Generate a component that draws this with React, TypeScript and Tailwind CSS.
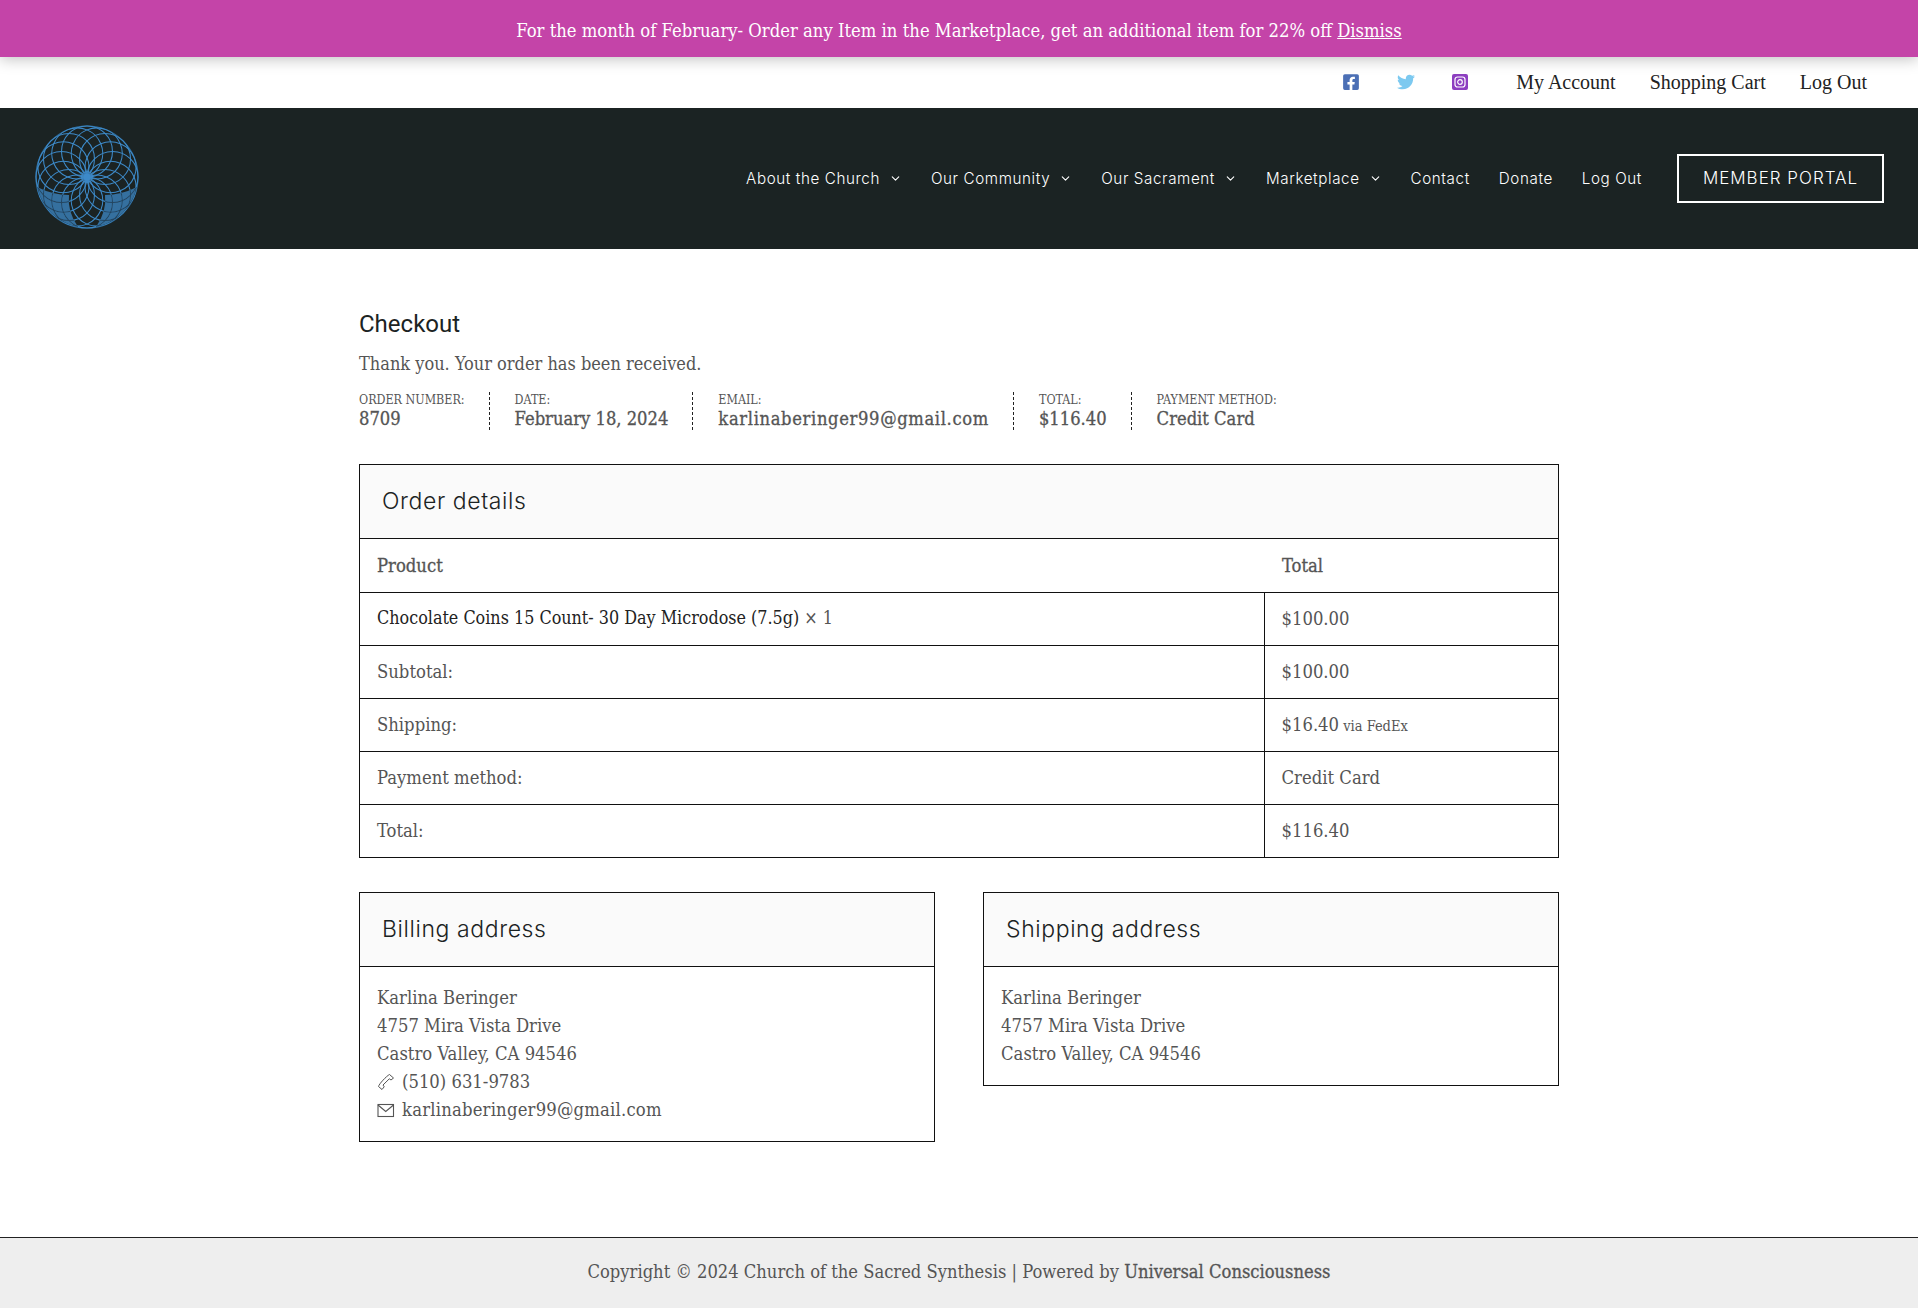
import { ChevronDown } from "lucide-react";
import { FaFacebookSquare, FaTwitter } from "react-icons/fa";

const body = "font-['DejaVu_Serif_Condensed','DejaVu_Serif',serif]";

const petals = Array.from({ length: 16 }, (_, i) => i * 22.5);

const lobeLeft = "M-50 10 Q-34 18 -18 18 Q-20 34 -9 50 A51.5 51.5 0 0 1 -50 10Z";
const lobeRight = "M50 10 Q34 18 18 18 Q20 34 9 50 A51.5 51.5 0 0 0 50 10Z";

function Logo() {
  return (
    <svg width="104" height="104" viewBox="-52 -52 104 104" fill="none" stroke="#3d8ac9" strokeWidth="1.05" className="mb-[3px]">
      <defs>
        <clipPath id="logo-lobes">
          <path d={lobeLeft} />
          <path d={lobeRight} />
        </clipPath>
      </defs>
      <path d={lobeLeft} fill="#35709f" stroke="none" />
      <path d={lobeRight} fill="#35709f" stroke="none" />
      <circle r="51" stroke="#2f6a98" strokeWidth="1.2" />
      {petals.map((a) => (
        <circle key={a} cx="0" cy="-25.5" r="25.5" transform={`rotate(${a})`} />
      ))}
      <g clipPath="url(#logo-lobes)" stroke="#24455f">
        {petals.map((a) => (
          <circle key={a} cx="0" cy="-25.5" r="25.5" transform={`rotate(${a})`} />
        ))}
      </g>
      <circle r="3.5" fill="#3d8ac9" stroke="none" />
    </svg>
  );
}

function InstagramIcon() {
  return (
    <svg width="16" height="16" viewBox="0 0 16 16">
      <rect width="16" height="16" rx="2" fill="#8d3fc0" />
      <rect x="3" y="3" width="10" height="10" rx="2.5" fill="none" stroke="#fff" strokeWidth="1.2" />
      <circle cx="8" cy="8" r="2.3" fill="none" stroke="#fff" strokeWidth="1.2" />
    </svg>
  );
}

function PhoneIcon() {
  return (
    <svg width="18" height="18" viewBox="0 0 18 18" fill="none" stroke="#555" strokeWidth="1">
      <path d="M12.5 1.5 L16.5 5 L14 7 L12.3 5.8 L6 12 L7.2 13.8 L5 16.5 L1.5 13.5 C2 11 9.5 3 12.5 1.5Z" strokeLinejoin="round" />
    </svg>
  );
}

function MailIcon() {
  return (
    <svg width="18" height="18" viewBox="0 0 18 18" fill="none" stroke="#555" strokeWidth="1.1">
      <rect x="1" y="3.5" width="15.5" height="12" />
      <path d="M1 4 L8.75 10.5 L16.5 4" />
    </svg>
  );
}

function NavLink({ label, caret }: { label: string; caret?: boolean }) {
  return (
    <span className="flex items-center whitespace-nowrap">
      {label}
      {caret && <ChevronDown size={13} strokeWidth={2} className="ml-[9px]" />}
    </span>
  );
}

function OrderStat({ label, value, last, wide }: { label: string; value: string; last?: boolean; wide?: boolean }) {
  return (
    <li className={`pr-[24px] mr-[25px] ${last ? "" : "border-r border-dashed border-[#222]"}`}>
      <div className="text-[12.4px] leading-[15px] uppercase text-[#555]">{label}</div>
      <div className={`text-[18.2px] leading-[23px] [-webkit-text-stroke:0.3px_#555] text-[#555] ${wide ? "tracking-[0.65px]" : ""}`}>{value}</div>
    </li>
  );
}

function BoxTitle({ children }: { children: string }) {
  return (
    <h2 className="h-[74px] flex items-center px-[22px] bg-[#fafafa] border-b border-[#111] font-['Inter',sans-serif] font-light text-[23px] tracking-[0.6px] text-[#1b2323]">
      {children}
    </h2>
  );
}

const rows = [
  ["Subtotal:", "$100.00"],
  ["Shipping:", "$16.40"],
  ["Payment method:", "Credit Card"],
  ["Total:", "$116.40"],
];

export default function App() {
  return (
    <div className={`min-h-[1308px] flex flex-col bg-white text-[#555] ${body}`}>
      <div className="relative z-10 h-[57px] pt-[4px] flex items-center justify-center bg-[#c444a8] text-white text-[18.3px] shadow-[0_2px_14px_rgba(0,0,0,0.25)]">
        <span>
          For the month of February- Order any Item in the Marketplace, get an additional item for 22% off{" "}
          <a className="underline">Dismiss</a>
        </span>
      </div>

      <div className="h-[51px] pb-[2px] flex items-center justify-end pr-[51px] font-['Liberation_Serif',serif] text-[20px] text-[#222]">
        <div className="flex items-center gap-[37px] mr-[48px]">
          <FaFacebookSquare size={18} className="text-[#4b6fb5]" />
          <FaTwitter size={18} className="text-[#7cc9f0]" />
          <InstagramIcon />
        </div>
        <div className="flex items-center gap-[34px]">
          <span>My Account</span>
          <span>Shopping Cart</span>
          <span>Log Out</span>
        </div>
      </div>

      <header className="h-[141px] flex items-center justify-between pl-[35px] pr-[34px] bg-[#1b2323] text-white">
        <Logo />
        <nav className="flex items-center font-['Inter',sans-serif] font-light text-[15.2px] tracking-[0.6px]">
          <div className="flex items-center gap-[29px] pt-[1px]">
            <NavLink label="About the Church" caret />
            <NavLink label="Our Community" caret />
            <NavLink label="Our Sacrament" caret />
            <NavLink label="Marketplace" caret />
            <NavLink label="Contact" />
            <NavLink label="Donate" />
            <NavLink label="Log Out" />
          </div>
          <a className="ml-[35px] h-[49px] w-[207px] flex items-center justify-center border-2 border-white text-[17px] tracking-[1px]">
            MEMBER PORTAL
          </a>
        </nav>
      </header>

      <main className="w-[1200px] mx-auto pt-[60px]">
        <h1 className="font-['Roboto',sans-serif] text-[24px] leading-[30px] text-[#1b2323]">Checkout</h1>
        <p className="mt-[12px] text-[18px] leading-[26px]">Thank you. Your order has been received.</p>

        <ul className="mt-[15px] flex">
          <OrderStat label="Order number:" value="8709" />
          <OrderStat label="Date:" value="February 18, 2024" />
          <OrderStat label="Email:" value="karlinaberinger99@gmail.com" wide />
          <OrderStat label="Total:" value="$116.40" />
          <OrderStat label="Payment method:" value="Credit Card" last />
        </ul>

        <section className="mt-[34px] border border-[#111]">
          <BoxTitle>Order details</BoxTitle>
          <table className="w-full border-collapse text-[18.3px]">
            <thead>
              <tr className="h-[53px] border-b border-[#111] text-left">
                <th className="pl-[17px] font-normal [-webkit-text-stroke:0.3px_#555]">Product</th>
                <th className="w-[294px] pl-[18px] font-normal [-webkit-text-stroke:0.3px_#555]">Total</th>
              </tr>
            </thead>
            <tbody>
              <tr className="h-[53px] border-b border-[#111]">
                <td className="pl-[17px] text-[17.8px] text-[#222]">
                  Chocolate Coins 15 Count- 30 Day Microdose (7.5g) <span className="text-[#555]">× 1</span>
                </td>
                <td className="pl-[17px] border-l border-[#111]">$100.00</td>
              </tr>
              {rows.map(([label, value], i) => (
                <tr key={label} className={`h-[53px] ${i < rows.length - 1 ? "border-b border-[#111]" : ""}`}>
                  <td className="pl-[17px]">{label}</td>
                  <td className="pl-[17px] border-l border-[#111]">
                    {value}
                    {label === "Shipping:" && <small className="text-[14.5px]"> via FedEx</small>}
                  </td>
                </tr>
              ))}
            </tbody>
          </table>
        </section>

        <div className="mt-[34px] grid grid-cols-2 gap-[48px] items-start">
          <section className="border border-[#111]">
            <BoxTitle>Billing address</BoxTitle>
            <address className="not-italic px-[17px] pt-[17px] pb-[17px] text-[18.3px] leading-[28px]">
              <div>Karlina Beringer</div>
              <div>4757 Mira Vista Drive</div>
              <div>Castro Valley, CA 94546</div>
              <div className="flex items-center gap-[7px]">
                <PhoneIcon />
                (510) 631-9783
              </div>
              <div className="flex items-center gap-[7px] tracking-[0.2px]">
                <MailIcon />
                karlinaberinger99@gmail.com
              </div>
            </address>
          </section>
          <section className="border border-[#111]">
            <BoxTitle>Shipping address</BoxTitle>
            <address className="not-italic px-[17px] pt-[17px] pb-[17px] text-[18.3px] leading-[28px]">
              <div>Karlina Beringer</div>
              <div>4757 Mira Vista Drive</div>
              <div>Castro Valley, CA 94546</div>
            </address>
          </section>
        </div>
      </main>

      <footer className="mt-auto h-[71px] pb-[2px] flex items-center justify-center bg-[#eee] border-t border-[#222] text-[18.2px]">
        <span>
          Copyright © 2024 Church of the Sacred Synthesis | Powered by <strong className="font-normal [-webkit-text-stroke:0.3px_#555]">Universal Consciousness</strong>
        </span>
      </footer>
    </div>
  );
}
